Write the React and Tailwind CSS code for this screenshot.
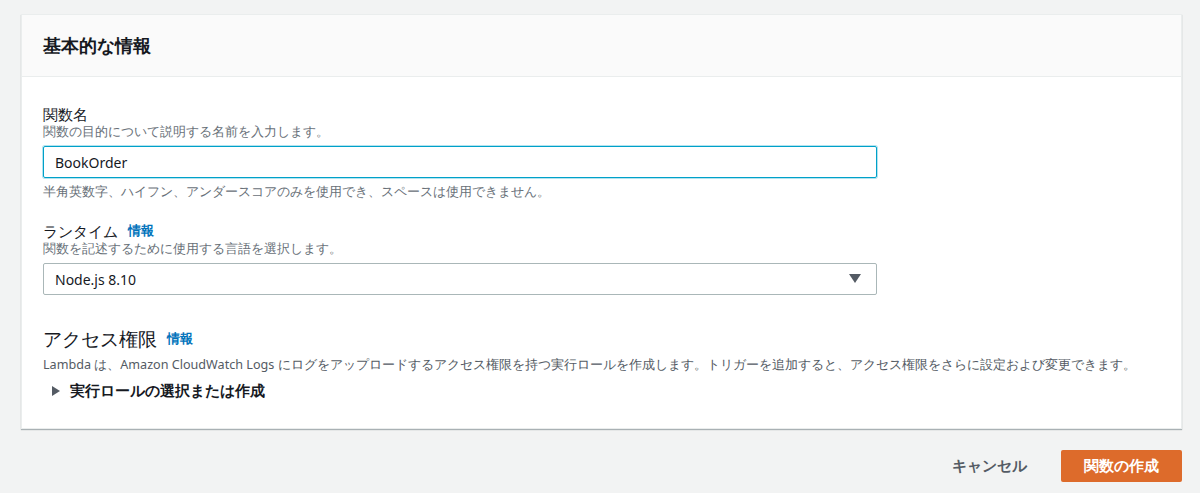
export default function App() {
  return (
    <div className="w-[1200px] h-[493px] bg-[#f2f3f3] pt-[14px] px-[21px] text-[#16191f] [font-family:'Open_Sans','Noto_Sans_CJK_JP',sans-serif]">
      {/* Card */}
      <div className="w-[1161px] h-[415px] bg-white border border-[#eaeded] shadow-[0_1px_1px_rgba(0,28,36,0.3)]">
        <div className="h-[62px] bg-[#fafafa] border-b border-[#eaeded] px-[21px] flex items-center">
          <h2 className="text-[18px] font-bold text-[#16191f]">基本的な情報</h2>
        </div>
        <div className="px-[21px] pt-[27px]">
          {/* Function name */}
          <div className="text-[14.5px] leading-[20px]">関数名</div>
          <div className="text-[12.6px] leading-[16px] text-[#687078]">関数の目的について説明する名前を入力します。</div>
          <div className="mt-[6px] w-[834px] h-[32px] border border-[#00a1c9] rounded-[2px] shadow-[0_0_0_1px_rgba(0,161,201,0.3)] flex items-center px-[11px] text-[14px]">
            BookOrder
          </div>
          <div className="mt-[6px] text-[12.6px] leading-[16px] text-[#687078]">半角英数字、ハイフン、アンダースコアのみを使用でき、スペースは使用できません。</div>

          {/* Runtime */}
          <div className="mt-[21px] text-[14.5px] leading-[20px] flex items-center gap-[10px]">
            ランタイム <span className="text-[12.6px] font-bold text-[#0073bb]">情報</span>
          </div>
          <div className="text-[12.6px] leading-[16px] text-[#687078]">関数を記述するために使用する言語を選択します。</div>
          <div className="mt-[6px] w-[834px] h-[32px] border border-[#aab7b8] rounded-[2px] flex items-center justify-between px-[11px] text-[14px]">
            <span>Node.js 8.10</span>
            <svg width="12" height="10" viewBox="0 0 12 10" className="mr-[4px]"><path d="M0 0h12L6 9z" fill="#545b64" /></svg>
          </div>

          {/* Permissions */}
          <div className="mt-[31px] flex items-center gap-[10px]">
            <span className="text-[18.5px] leading-[26px]">アクセス権限</span>
            <span className="text-[12.6px] font-bold text-[#0073bb]">情報</span>
          </div>
          <div className="mt-[5px] text-[12.6px] leading-[16px] text-[#545b64]">
            Lambda は、Amazon CloudWatch Logs にログをアップロードするアクセス権限を持つ実行ロールを作成します。トリガーを追加すると、アクセス権限をさらに設定および変更できます。
          </div>
          <div className="mt-[7px] flex items-center gap-[9px] text-[14.5px] font-bold text-[#16191f]">
            <svg width="10" height="10" viewBox="0 0 10 10" className="ml-[8px]"><path d="M1 0v10l8-5z" fill="#545b64" /></svg>
            実行ロールの選択または作成
          </div>
        </div>
      </div>

      {/* Actions */}
      <div className="mt-[21px] w-[1161px] flex justify-end items-center gap-[34px]">
        <span className="text-[14.5px] font-bold text-[#545b64]">キャンセル</span>
        <button className="w-[121px] h-[32px] bg-[#dd6b2b] rounded-[2px] text-white text-[14.5px] font-bold">関数の作成</button>
      </div>
    </div>
  );
}
